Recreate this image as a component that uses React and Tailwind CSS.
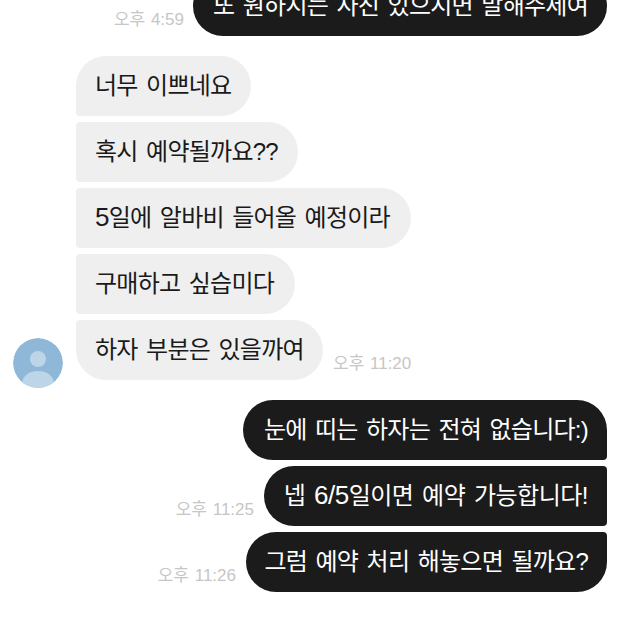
const FONT = "font-['Liberation_Sans','Noto_Sans_CJK_KR',sans-serif]"

function Time({ children }) {
  return <span className="mb-[4px] whitespace-nowrap text-[17px] leading-6 text-[#c6c6c6] [word-spacing:1px]">{children}</span>
}

function Incoming({ className, children }) {
  return (
    <div className={`flex h-[60px] items-center whitespace-pre bg-[#efefef] pl-[19px] text-[24px] tracking-[-0.75px] text-[#1a1a1a] [word-spacing:2.5px] ${className}`}>
      <span>{children}</span>
    </div>
  )
}

function Outgoing({ className, children }) {
  return (
    <div className={`flex h-[60px] shrink-0 items-center justify-end whitespace-pre bg-[#1b1b1b] pr-[19px] text-[24px] text-white [word-spacing:2.5px] ${className}`}>
      <span>{children}</span>
    </div>
  )
}

function Avatar() {
  return (
    <svg viewBox="0 0 50 50" className="mb-[-8px] h-[50px] w-[50px] shrink-0 rounded-full">
      <circle cx="25" cy="25" r="25" fill="#8fb8d8" />
      <circle cx="25" cy="21" r="8" fill="#bcd5e7" />
      <ellipse cx="25" cy="44" rx="15.5" ry="11" fill="#bcd5e7" />
    </svg>
  )
}

export default function App() {
  return (
    <div className={`${FONT} h-[620px] w-[620px] overflow-hidden bg-white`}>
      <div className="mt-[-24px] flex flex-col">
        <div className="flex items-end justify-end gap-[9px] pr-[13px]">
          <Time>오후 4:59</Time>
          <Outgoing className="w-[414px] rounded-[30px] tracking-[-0.75px]">또 원하시는 사진 있으시면 말해주세여</Outgoing>
        </div>

        <div className="mt-5 flex flex-col items-start gap-[6px] pl-[76px]">
          <Incoming className="w-[175px] rounded-[30px] rounded-bl">너무 이쁘네요</Incoming>
          <Incoming className="w-[222px] rounded-r-[30px] rounded-l">혹시 예약될까요??</Incoming>
          <Incoming className="w-[335px] rounded-r-[30px] rounded-l"><span className="text-[26px] leading-none">5</span>일에 알바비 들어올 예정이라</Incoming>
          <Incoming className="w-[219px] rounded-r-[30px] rounded-l">구매하고 싶습미다</Incoming>
        </div>

        <div className="mt-[6px] flex items-end pl-[13px]">
          <Avatar />
          <div className="ml-[13px]">
            <Incoming className="w-[247px] rounded-[30px] rounded-tl">하자 부분은 있을까여</Incoming>
          </div>
          <div className="ml-[10px] flex">
            <Time>오후 11:20</Time>
          </div>
        </div>

        <div className="mt-5 flex flex-col items-end gap-[6px] pr-[13px]">
          <Outgoing className="w-[364px] rounded-[30px] rounded-br tracking-[-0.75px]">눈에 띠는 하자는 전혀 없습니다:)</Outgoing>
          <div className="flex items-end gap-[10px]">
            <Time>오후 11:25</Time>
            <Outgoing className="w-[343px] rounded-l-[30px] rounded-r tracking-[-0.5px]">넵 <span className="text-[26px] leading-none">6/5</span>일이면 예약 가능합니다!</Outgoing>
          </div>
          <div className="flex items-end gap-[10px]">
            <Time>오후 11:26</Time>
            <Outgoing className="w-[361px] rounded-[30px] rounded-tr tracking-[-0.75px]">그럼 예약 처리 해놓으면 될까요?</Outgoing>
          </div>
        </div>
      </div>
    </div>
  )
}
